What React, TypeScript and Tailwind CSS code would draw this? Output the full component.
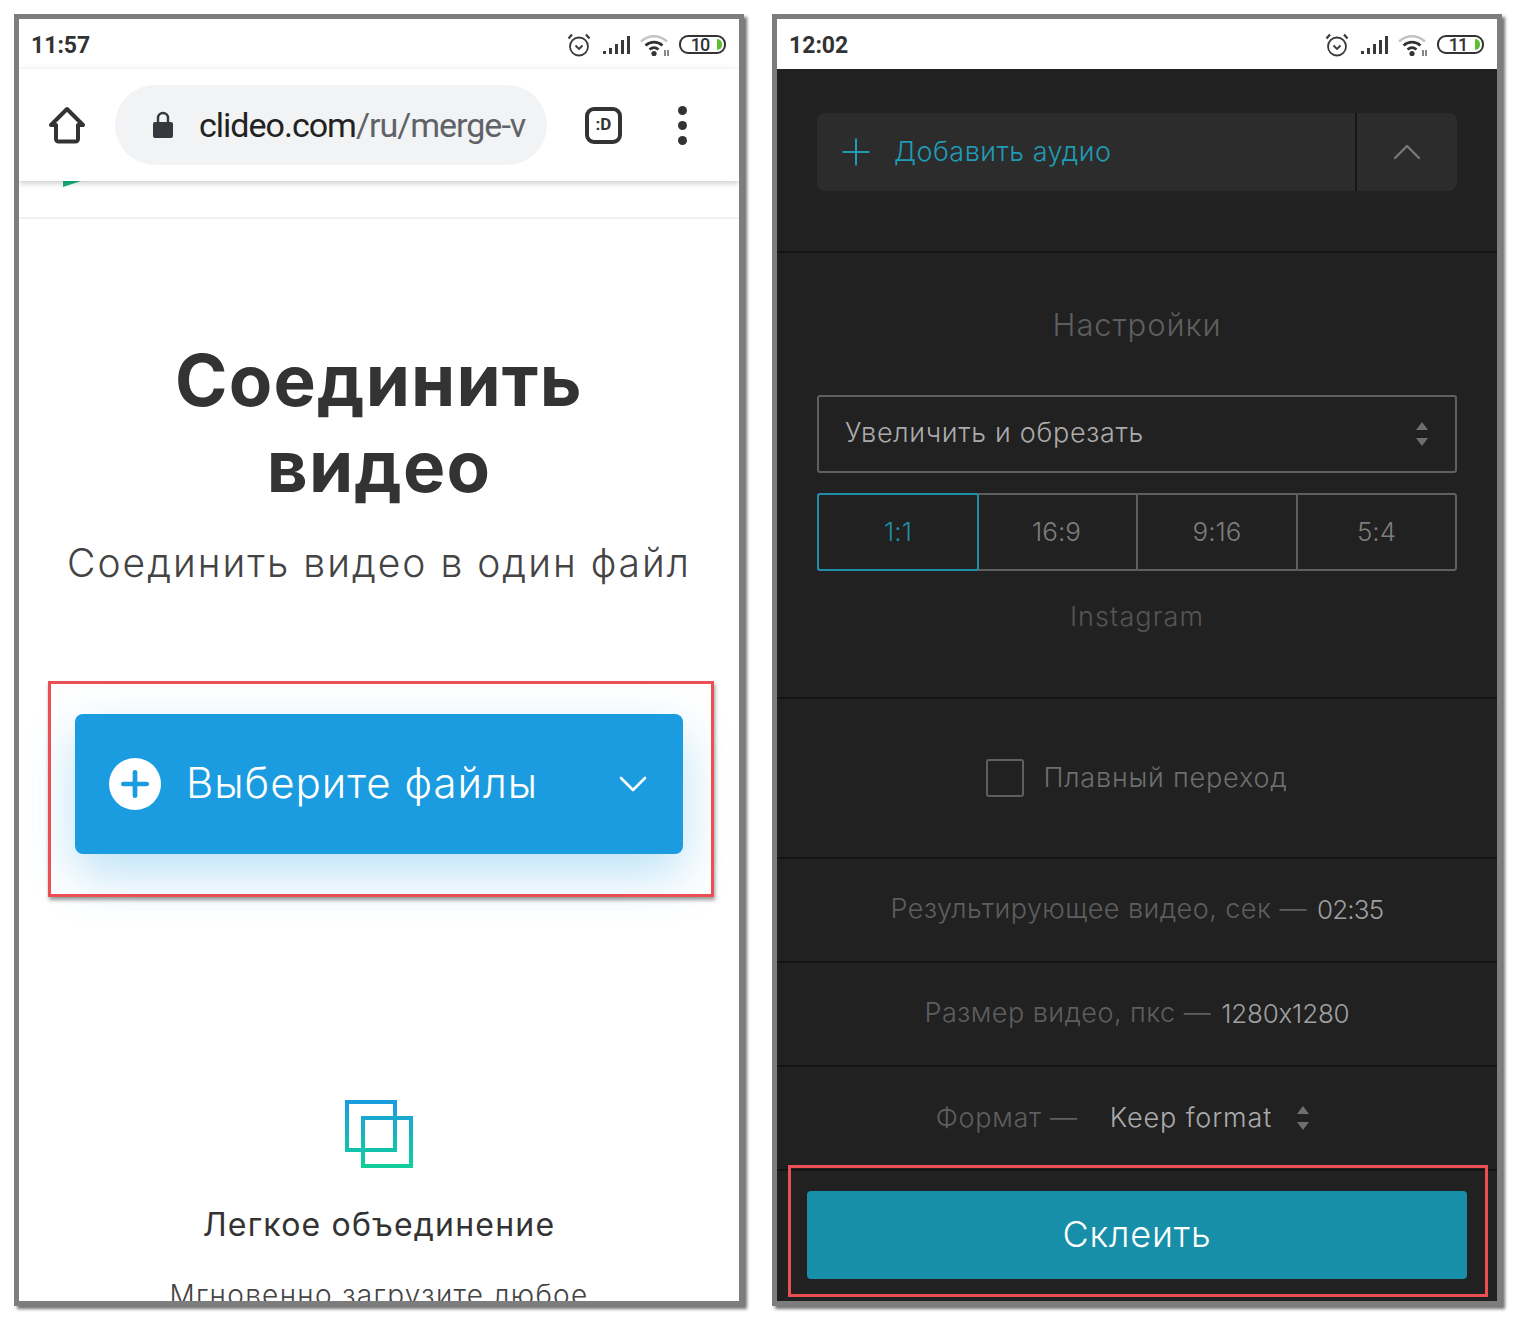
import { Plus, ChevronDown, ChevronUp } from "lucide-react";

function StatusIcons({ level }: { level: string }) {
  return (
    <div className="flex items-center">
      {/* alarm */}
      <svg width="26" height="26" viewBox="0 0 26 26" fill="none" stroke="#3a3a3a" strokeWidth="1.8" className="mr-[10px]">
        <circle cx="13" cy="14.5" r="9" />
        <path d="M9.5 13.5l3.5 3.5 3.5-3.5" />
        <path d="M2.5 6.5L6 2.5M23.5 6.5L20 2.5" strokeWidth="2.2" />
      </svg>
      {/* signal */}
      <svg width="30" height="22" viewBox="0 0 30 22" fill="#3a3a3a" className="mr-[8px]">
        <rect x="1" y="17" width="3" height="3" />
        <rect x="7" y="14" width="3" height="6" />
        <rect x="13" y="10" width="3" height="10" />
        <rect x="19" y="6" width="3" height="14" />
        <rect x="25" y="2" width="3" height="18" />
      </svg>
      {/* wifi */}
      <svg width="30" height="24" viewBox="0 0 30 24" fill="none" className="mr-[9px]">
        <path d="M1 8.5C8.5 1.5 19.5 1.5 27 8.5" stroke="#c4c4c4" strokeWidth="2.6" />
        <path d="M5.5 12.5C10.5 8 17.5 8 22.5 12.5" stroke="#333" strokeWidth="2.6" />
        <path d="M9.5 16.5C12.5 14 15.5 14 18.5 16.5" stroke="#333" strokeWidth="2.6" />
        <circle cx="14" cy="20.5" r="2.6" fill="#333" />
        <path d="M25 17v6M28 17v6" stroke="#555" strokeWidth="1.4" />
      </svg>
      {/* battery */}
      <div className="relative flex h-[19px] w-[47px] items-center overflow-hidden rounded-[9px] border-2 border-[#333] bg-white">
        <span className="w-[38px] text-center font-['Roboto',sans-serif] text-[18px] leading-none font-medium tracking-[-1px] text-[#333]">{level}</span>
        <div className="absolute top-[2px] right-[2px] h-[11px] w-[5px] rounded-r-[5px] bg-[#5cc02f]" />
      </div>
    </div>
  );
}

function StatusBar({ time, level }: { time: string; level: string }) {
  return (
    <div className="flex h-[50px] shrink-0 items-center justify-between bg-white pt-[1px] pr-[13px] pl-[12px]">
      <span className="pt-[2px] font-['Roboto',sans-serif] text-[23px] leading-none font-bold text-[#333]">{time}</span>
      <StatusIcons level={level} />
    </div>
  );
}

function Updown({ color }: { color: string }) {
  return (
    <svg width="14" height="28" viewBox="0 0 14 28" fill={color}>
      <path d="M7 2l6 8H1z" />
      <path d="M7 26l-6-8h12z" />
    </svg>
  );
}

const sans = "font-['Inter',sans-serif] [font-feature-settings:'calt'_0]";

function LeftPhone() {
  return (
    <div className="relative flex h-[1292px] w-[730px] shrink-0 flex-col overflow-hidden border-[5px] border-[#7d7d7d] bg-white shadow-[3px_3px_3px_rgba(0,0,0,0.55)]">
      <StatusBar time="11:57" level="10" />
      {/* browser toolbar */}
      <div className="relative z-10 flex h-[112px] shrink-0 items-center bg-white shadow-[0_2px_6px_rgba(0,0,0,0.22)]">
        <svg width="38" height="38" viewBox="0 0 38 38" fill="none" stroke="#333" strokeWidth="4" strokeLinejoin="round" className="ml-[29px]">
          <path d="M3 19L19 3l16 16h-5v14a2.5 2.5 0 0 1-2.5 2.5h-17A2.5 2.5 0 0 1 8 33V19z" />
        </svg>
        <div className="ml-[29px] flex h-[80px] w-[432px] items-center rounded-[40px] bg-[#f1f3f4]">
          <svg width="22" height="28" viewBox="0 0 22 28" className="ml-[37px]" fill="#35393d">
            <path d="M1 13a2 2 0 0 1 2-2h16a2 2 0 0 1 2 2v12a2 2 0 0 1-2 2H3a2 2 0 0 1-2-2z" />
            <path d="M6 12V7a5 5 0 0 1 10 0v5" fill="none" stroke="#35393d" strokeWidth="2.4" />
          </svg>
          <span className="ml-[25px] font-['Roboto',sans-serif] text-[34px] leading-none tracking-[-1px] whitespace-nowrap text-[#222]">
            clideo.com<span className="text-[#5f6368]">/ru/merge-v</span>
          </span>
        </div>
        <div className="ml-[38px] flex h-[37px] w-[37px] items-center justify-center rounded-[9px] border-[4px] border-[#333] font-['Roboto',sans-serif] text-[17px] font-bold text-[#333]">
          :D
        </div>
        <div className="ml-[56px] flex flex-col gap-[6px]">
          <div className="h-[9px] w-[9px] rounded-full bg-[#333]" />
          <div className="h-[9px] w-[9px] rounded-full bg-[#333]" />
          <div className="h-[9px] w-[9px] rounded-full bg-[#333]" />
        </div>
      </div>

      {/* clipped site header */}
      <div className="h-[38px] shrink-0 border-b-2 border-[#f0f0f0] bg-white">
        <svg width="20" height="6" viewBox="0 0 20 6" fill="#15b57c" className="ml-[43px]">
          <path d="M1 0h18L1 6z" />
        </svg>
      </div>

      <div className={`flex flex-col items-center ${sans}`}>
        <h1 className="mt-[118px] text-center text-[71px] leading-[86px] font-bold tracking-[1.2px] text-[#333]">
          Соединить
          <br />
          видео
        </h1>
        <p className="mt-[32px] text-[39px] leading-[44px] font-light tracking-[2px] whitespace-nowrap text-[#444]">Соединить видео в один файл</p>

        <div className="mt-[129px] flex h-[140px] w-[608px] items-center rounded-[8px] bg-[#1b9be0] shadow-[0_20px_50px_rgba(27,155,224,0.3)]">
          <div className="ml-[34px] flex h-[52px] w-[52px] items-center justify-center rounded-full bg-white">
            <Plus size={40} strokeWidth={2.8} color="#1b9be0" />
          </div>
          <span className="ml-[25px] pb-[4px] text-[42px] font-light tracking-[1px] whitespace-nowrap text-white">Выберите файлы</span>
          <ChevronDown size={48} strokeWidth={1.3} color="#fff" className="mr-[26px] ml-auto" />
        </div>

        <svg width="68" height="68" viewBox="0 0 68 68" fill="none" strokeWidth="4" className="mt-[246px]">
          <defs>
            <linearGradient id="mergeGrad" gradientUnits="userSpaceOnUse" x1="0" y1="0" x2="0" y2="68">
              <stop offset="0" stopColor="#1b9be0" />
              <stop offset="1" stopColor="#10d098" />
            </linearGradient>
          </defs>
          <rect x="2" y="2" width="48" height="48" stroke="url(#mergeGrad)" />
          <rect x="18" y="18" width="48" height="48" stroke="url(#mergeGrad)" />
        </svg>
        <div className="mt-[38px] text-[32px] leading-[38px] tracking-[1.2px] whitespace-nowrap text-[#333]">Легкое объединение</div>
        <div className="mt-[34px] text-[28px] leading-[34px] font-light tracking-[1.3px] whitespace-nowrap text-[#444]">Мгновенно загрузите любое</div>
      </div>

      <div className="absolute top-[662px] left-[29px] h-[216px] w-[666px] border-[3px] border-[#ea4f55] shadow-[1px_3px_4px_rgba(0,0,0,0.4)]" />
    </div>
  );
}

function Row({ height, children }: { height: string; children: React.ReactNode }) {
  return <div className={`flex shrink-0 items-center justify-center border-b-2 border-[#141414] ${height}`}>{children}</div>;
}

function RightPhone() {
  return (
    <div className="relative flex h-[1292px] w-[730px] shrink-0 flex-col overflow-hidden border-[5px] border-[#7d7d7d] bg-[#212121] shadow-[3px_3px_3px_rgba(0,0,0,0.55)]">
      <StatusBar time="12:02" level="11" />
      <div className={`flex grow flex-col ${sans}`}>
        {/* add audio */}
        <div className="flex h-[184px] shrink-0 items-start border-b-2 border-[#141414] px-[40px] pt-[44px]">
          <div className="flex h-[78px] w-full items-center rounded-[8px] bg-[#2c2c2c]">
            <Plus size={44} strokeWidth={1.1} color="#1f9bb5" className="ml-[17px]" />
            <span className="ml-[16px] text-[27px] font-light tracking-[0.5px] text-[#1f9bb5]">Добавить аудио</span>
            <div className="ml-auto flex h-full w-[102px] items-center justify-center border-l-2 border-[#171717]">
              <ChevronUp size={48} strokeWidth={1.2} color="#777" />
            </div>
          </div>
        </div>

        {/* settings */}
        <div className="flex h-[446px] shrink-0 flex-col border-b-2 border-[#141414] px-[40px]">
          <div className="mt-[52px] text-center text-[31px] leading-[40px] font-light tracking-[0.9px] text-[#5e5e5e]">Настройки</div>
          <div className="mt-[50px] flex h-[78px] items-center justify-between rounded-[3px] border-2 border-[#5f5f5f] pr-[26px] pl-[26px]">
            <span className="pb-[2px] text-[27px] font-light tracking-[0.7px] text-[#ababab]">Увеличить и обрезать</span>
            <Updown color="#6f6f6f" />
          </div>
          <div className="mt-[20px] grid h-[78px] grid-cols-[158px_161px_160px_1fr] rounded-[3px] border-2 border-[#5f5f5f] text-[26px] font-light text-[#7d7d7d]">
            <div className="-m-[2px] flex items-center justify-center rounded-[3px] border-2 border-[#1f8ea6] text-[#1f8ea6]">
              <span className="pb-[2px]">1:1</span>
            </div>
            <div className="flex items-center justify-center border-r-2 border-[#5f5f5f]">
              <span className="pb-[2px]">16:9</span>
            </div>
            <div className="flex items-center justify-center border-r-2 border-[#5f5f5f]">
              <span className="pb-[2px]">9:16</span>
            </div>
            <div className="flex items-center justify-center">
              <span className="pb-[2px]">5:4</span>
            </div>
          </div>
          <div className="mt-[29px] text-center text-[27px] leading-[34px] font-light tracking-[1.1px] text-[#555]">Instagram</div>
        </div>

        <Row height="h-[160px]">
          <div className="h-[38px] w-[38px] rounded-[3px] border-2 border-[#5f5f5f]" />
          <span className="ml-[19px] text-[27px] font-light tracking-[0.8px] text-[#6e6e6e]">Плавный переход</span>
        </Row>
        <Row height="h-[104px]">
          <span className="pb-[2px] text-[27px] font-light tracking-[0.45px] text-[#5e5e5e]">Результирующее видео, сек —</span>
          <span className="ml-[10px] pb-[2px] text-[26px] font-light tracking-[-0.8px] text-[#a0a0a0]">02:35</span>
        </Row>
        <Row height="h-[104px]">
          <span className="pb-[2px] text-[27px] font-light tracking-[0.45px] text-[#5e5e5e]">Размер видео, пкс —</span>
          <span className="ml-[10px] pb-[2px] text-[26px] font-light tracking-[-0.2px] text-[#a0a0a0]">1280x1280</span>
        </Row>
        <Row height="h-[104px] pr-[28px]">
          <span className="text-[27px] font-light tracking-[0.7px] text-[#5e5e5e]">Формат —</span>
          <span className="ml-[32px] text-[27px] font-light tracking-[0.9px] text-[#ababab]">Keep format</span>
          <div className="ml-[24px] flex">
            <Updown color="#6f6f6f" />
          </div>
        </Row>

        <div className="px-[30px] pt-[20px]">
          <div className="flex h-[88px] items-center justify-center rounded-[4px] bg-[#178fa9] pb-[2px] text-[36px] font-light tracking-[0.8px] text-white">Склеить</div>
        </div>
      </div>

      <div className="absolute top-[1146px] left-[11px] h-[132px] w-[700px] border-[3px] border-[#ea4f55]" />
    </div>
  );
}

export default function App() {
  return (
    <div className="flex h-[1322px] w-[1520px] items-start gap-[28px] bg-white pt-[14px] pl-[14px]">
      <LeftPhone />
      <RightPhone />
    </div>
  );
}
